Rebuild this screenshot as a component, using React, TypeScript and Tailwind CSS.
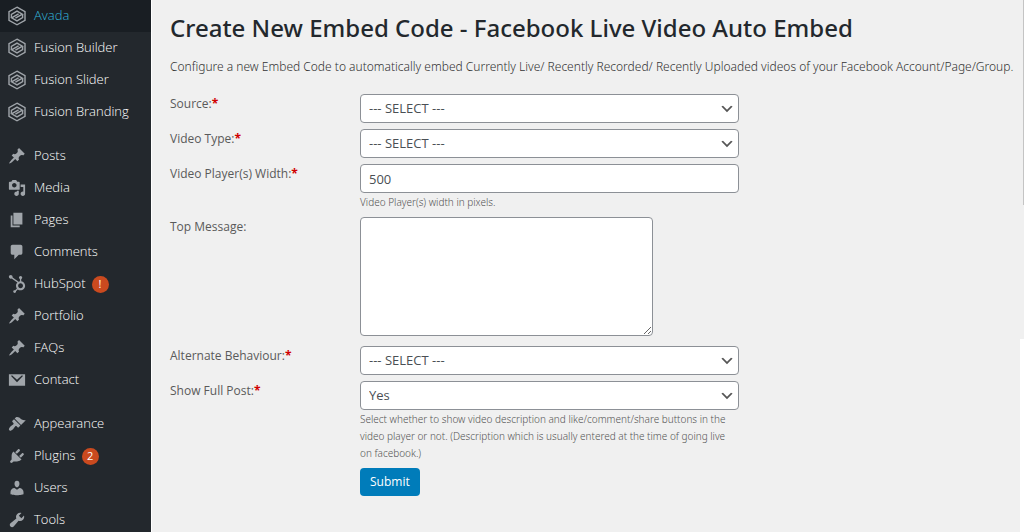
import { useState, type ReactNode } from "react"
import { FaHubspot } from "react-icons/fa"

interface MenuItem {
  title: string
  icon: ReactNode
  badge?: string
  active?: boolean
}

interface FieldProps {
  id: string
  label: string
  required?: boolean
  hint?: string
  children: ReactNode
}

interface SelectProps {
  id: string
  options: string[]
}

// Single path icon on the 20px admin grid
const Glyph = ({ d }: { d: string }) => (
  <svg viewBox="0 0 20 20" className="size-[18px]" fill="currentColor" aria-hidden="true">
    <path d={d} />
  </svg>
)

const AvadaIcon = () => (
  <svg viewBox="0 0 20 20" className="size-5" fill="none" stroke="currentColor" strokeWidth="1.4" aria-hidden="true">
    <path d="M10 1.2 18 5.7v8.6L10 18.8 2 14.3V5.7z" />
    <path d="M4.4 11.4V8.4L10 5.1l5.4 3.1-7 4" />
    <path d="M15.6 8.6v3L10 14.9l-5.4-3.1 7-4" />
  </svg>
)

const PinIcon = () => (
  <Glyph d="M10.44 3.02l1.82-1.82 6.36 6.35-1.83 1.82c-1.05-.68-2.48-.57-3.41.36l-.75.75c-.92.93-1.04 2.35-.35 3.41l-1.83 1.82-2.41-2.41-2.8 2.79c-.42.42-3.38 2.71-3.8 2.29s1.86-3.39 2.28-3.81l2.79-2.79L4.1 9.36l1.83-1.82c1.05.69 2.48.57 3.4-.36l.75-.75c.93-.92 1.05-2.35.36-3.41z" />
)

const menuGroups: MenuItem[][] = [
  [
    { title: "Avada", icon: <AvadaIcon />, active: true },
    { title: "Fusion Builder", icon: <AvadaIcon /> },
    { title: "Fusion Slider", icon: <AvadaIcon /> },
    { title: "Fusion Branding", icon: <AvadaIcon /> },
  ],
  [
    { title: "Posts", icon: <PinIcon /> },
    {
      title: "Media",
      icon: (
        <Glyph d="M13 11V4c0-.55-.45-1-1-1h-1.67L9 1H5L3.67 3H2c-.55 0-1 .45-1 1v7c0 .55.45 1 1 1h10c.55 0 1-.45 1-1zM7 4.5c1.38 0 2.5 1.12 2.5 2.5S8.38 9.5 7 9.5 4.5 8.38 4.5 7 5.62 4.5 7 4.5zM14 6h5v10.5c0 1.38-1.12 2.5-2.5 2.5S14 17.88 14 16.5s1.12-2.5 2.5-2.5c.17 0 .34.02.5.05V9h-3V6zm-4 8.05V13h2v3.5c0 1.38-1.12 2.5-2.5 2.5S7 17.88 7 16.5 8.12 14 9.5 14c.17 0 .34.02.5.05z" />
      ),
    },
    { title: "Pages", icon: <Glyph d="M6 15V2h10v13H6zm-1 1h8v2H3V5h2v11z" /> },
    {
      title: "Comments",
      icon: <Glyph d="M5 2h9c1.1 0 2 .9 2 2v7c0 1.1-.9 2-2 2h-2l-5 5v-5H5c-1.1 0-2-.9-2-2V4c0-1.1.9-2 2-2z" />,
    },
    { title: "HubSpot", icon: <FaHubspot className="size-[18px]" />, badge: "!" },
    { title: "Portfolio", icon: <PinIcon /> },
    { title: "FAQs", icon: <PinIcon /> },
    {
      title: "Contact",
      icon: <Glyph d="M1 3.5h18v13H1zM3.4 5.6 10 12.4l6.6-6.8-1-.9L10 9.6 4.4 4.7z" />,
    },
  ],
  [
    {
      title: "Appearance",
      icon: (
        <Glyph d="M14.48 11.06L7.41 3.99l1.5-1.5c.5-.56 2.3-.47 3.51.32 1.21.8 1.43 1.28 2.91 2.1 1.18.64 2.45 1.26 4.45.85zm-.71.71L6.7 4.7 4.93 6.47c-.39.39-.39 1.02 0 1.41l1.06 1.06c.39.39.39 1.03 0 1.42-.6.6-1.43 1.11-2.21 1.69-.35.26-.7.53-1.01.84C1.43 14.23.4 16.08 1.4 17.07c.99 1 2.84-.03 4.18-1.36.31-.31.58-.66.85-1.02.57-.78 1.08-1.61 1.69-2.21.39-.39 1.02-.39 1.41 0l1.06 1.06c.39.39 1.02.39 1.41 0z" />
      ),
    },
    {
      title: "Plugins",
      badge: "2",
      icon: (
        <Glyph d="M13.11 4.36L9.87 7.6 8 5.73l3.24-3.24c.35-.34 1.05-.2 1.56.32.52.51.66 1.21.31 1.55zm-8 1.77l.91-1.12 9.01 9.01-1.19.84c-.71.71-2.63 1.16-3.82 1.16H6.14L4.9 17.26c-.59.59-1.54.59-2.12 0-.59-.58-.59-1.53 0-2.12l1.24-1.24v-3.88c0-1.13.4-3.19 1.09-3.89zm7.26 3.97l3.24-3.24c.34-.35 1.04-.21 1.55.31.52.51.66 1.21.31 1.55l-3.24 3.25z" />
      ),
    },
    {
      title: "Users",
      icon: (
        <Glyph d="M10 9.25c-2.27 0-2.73-3.44-2.73-3.44C7 4.02 7.82 2 9.97 2c2.16 0 2.98 2.02 2.71 3.81 0 0-.41 3.44-2.68 3.44zm0 2.57L12.72 10c2.39 0 4.52 2.33 4.52 4.53v2.49s-3.65 1.13-7.24 1.13c-3.65 0-7.24-1.13-7.24-1.13v-2.49c0-2.25 1.94-4.48 4.47-4.48z" />
      ),
    },
    {
      title: "Tools",
      icon: (
        <Glyph d="M16.68 9.77c-1.34 1.34-3.3 1.67-4.95.99l-5.41 6.52c-.99.99-2.59.99-3.58 0s-.99-2.59 0-3.57l6.52-5.42c-.68-1.65-.35-3.61.99-4.95 1.28-1.28 3.12-1.62 4.72-1.06l-2.89 2.89 2.82 2.82 2.86-2.87c.53 1.58.18 3.39-1.08 4.65z" />
      ),
    },
  ],
]

const Sidebar = () => (
  <nav className="flex w-38 shrink-0 flex-col gap-3 border-r border-white bg-[#23282d] font-light">
    {menuGroups.map((group, i) => (
      <ul key={i}>
        {group.map((item) => (
          <li key={item.title}>
            <a
              href="#"
              className={`flex h-8 items-center pl-[7px] text-[13px] ${
                item.active ? "bg-[#191e23] text-[#32b5dc]" : "text-white"
              }`}
            >
              <span className="mr-[7px] flex w-5 justify-center text-[#a0a5aa]">{item.icon}</span>
              {item.title}
              {item.badge && (
                <span className="ml-1.5 flex size-[17px] items-center justify-center rounded-full bg-[#ca4a1f] text-[11px] font-normal text-white">
                  {item.badge}
                </span>
              )}
            </a>
          </li>
        ))}
      </ul>
    ))}
  </nav>
)

const Field = ({ id, label, required, hint, children }: FieldProps) => (
  <div className="flex items-start">
    <label htmlFor={id} className="w-[190px] shrink-0 text-[12px] leading-5">
      {label}:{required && <span className="font-bold text-[#d00000]">*</span>}
    </label>
    <div className="w-full max-w-[379px]">
      {children}
      {hint && (
        <p className="pt-px pr-2 font-['Noto_Sans','Open_Sans',sans-serif] text-[10px] leading-[17px] font-light text-[#555555]">
          {hint}
        </p>
      )}
    </div>
  </div>
)

const Select = ({ id, options }: SelectProps) => (
  <div className="relative">
    <select
      id={id}
      className="block h-[29px] w-full appearance-none rounded-sm border border-[#8c9096] bg-white px-2 text-[13px] text-[#4a4f54]"
    >
      {options.map((option) => (
        <option key={option}>{option}</option>
      ))}
    </select>
    <svg
      viewBox="0 0 20 20"
      className="pointer-events-none absolute top-[7px] right-1 size-4"
      fill="#555555"
      aria-hidden="true"
    >
      <path d="M5 6l5 5 5-5 2 1-7 7-7-7 2-1z" />
    </svg>
  </div>
)

const App = () => {
  const [width, setWidth] = useState("500")
  const [message, setMessage] = useState("")

  return (
    <div className="flex min-h-screen bg-[#f0f0f0] font-['Open_Sans','Noto_Sans',sans-serif] text-[#5a5a5a]">
      <Sidebar />

      <main className="min-w-0 flex-1 pt-3 pl-[18px]">
        <h1 className="font-['Noto_Sans','Open_Sans',sans-serif] text-[24px] leading-8 font-medium text-[#23282d]">
          Create New Embed Code - Facebook Live Video Auto Embed
        </h1>
        <p className="mt-3.5 font-['Noto_Sans','Open_Sans',sans-serif] text-[12px] leading-[18px] font-light whitespace-nowrap text-[#333333]">
          Configure a new Embed Code to automatically embed Currently Live/ Recently Recorded/ Recently Uploaded videos
          of your Facebook Account/Page/Group.
        </p>

        <form className="mt-[18px] flex flex-col gap-1.5" onSubmit={(e) => e.preventDefault()}>
          <Field id="source" label="Source" required>
            <Select id="source" options={["--- SELECT ---"]} />
          </Field>
          <Field id="video-type" label="Video Type" required>
            <Select id="video-type" options={["--- SELECT ---"]} />
          </Field>
          <Field id="player-width" label="Video Player(s) Width" required hint="Video Player(s) width in pixels.">
            <input
              id="player-width"
              type="text"
              value={width}
              onChange={(e) => setWidth(e.target.value)}
              className="block h-[29px] w-full rounded-sm border border-[#8c9096] bg-white px-2 text-[13px] text-[#4a4f54]"
            />
          </Field>
          <Field id="top-message" label="Top Message">
            <textarea
              id="top-message"
              value={message}
              onChange={(e) => setMessage(e.target.value)}
              className="mb-1 block h-[119px] w-[293px] rounded-sm border border-[#8c9096] bg-white px-2 py-1 text-[13px]"
            />
          </Field>
          <Field id="alternate" label="Alternate Behaviour" required>
            <Select id="alternate" options={["--- SELECT ---"]} />
          </Field>
          <Field
            id="full-post"
            label="Show Full Post"
            required
            hint="Select whether to show video description and like/comment/share buttons in the video player or not. (Description which is usually entered at the time of going live on facebook.)"
          >
            <Select id="full-post" options={["Yes", "No"]} />
          </Field>
          <div className="pl-[190px]">
            <button type="submit" className="block h-7 rounded-sm bg-[#007cba] px-2.5 text-[12px] text-white">
              Submit
            </button>
          </div>
        </form>
      </main>

      {/* Scroll track edge */}
      <div className="flex w-1 shrink-0 flex-col">
        <div className="h-[205px] border-r border-[#c4c4c4]" />
        <div className="mt-[134px] flex-1 bg-white" />
      </div>
    </div>
  )
}

export default App
